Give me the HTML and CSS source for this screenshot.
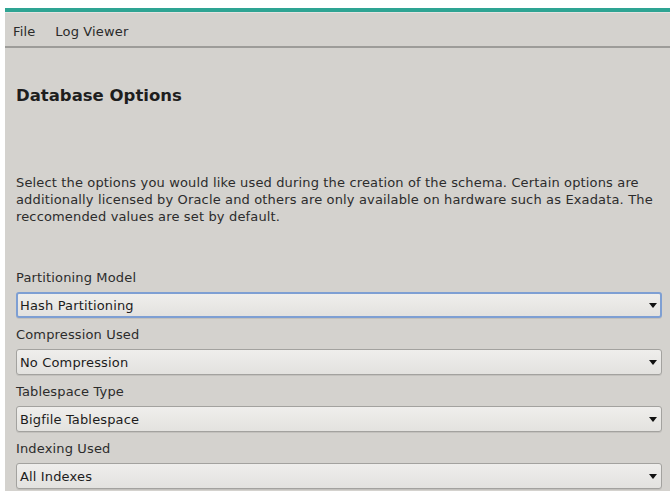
FILE: index.html
```html
<!DOCTYPE html>
<html lang="en">
<head>
<meta charset="utf-8">
<title>Database Options</title>
<link rel="stylesheet" href="styles.css">
</head>
<body>
<div class="app">
  <div class="accent"></div>
  <nav class="menubar">
    <span class="menu-item">File</span>
    <span class="menu-item">Log Viewer</span>
  </nav>
  <main class="content">
    <h1 class="title">Database Options</h1>
    <p class="intro">Select the options you would like used during the creation of the schema. Certain options are additionally licensed by Oracle and others are only available on hardware such as Exadata. The reccomended values are set by default.</p>
    <div class="field">
      <div class="label">Partitioning Model</div>
      <div class="combo focused"><span class="combo-text">Hash Partitioning</span><span class="arrow"></span></div>
    </div>
    <div class="field">
      <div class="label">Compression Used</div>
      <div class="combo"><span class="combo-text">No Compression</span><span class="arrow"></span></div>
    </div>
    <div class="field">
      <div class="label">Tablespace Type</div>
      <div class="combo"><span class="combo-text">Bigfile Tablespace</span><span class="arrow"></span></div>
    </div>
    <div class="field">
      <div class="label">Indexing Used</div>
      <div class="combo"><span class="combo-text">All Indexes</span><span class="arrow"></span></div>
    </div>
  </main>
</div>
</body>
</html>
```
FILE: styles.css
```css
html, body {
  margin: 0;
  padding: 0;
  background: #ffffff;
  overflow: hidden;
}

.app {
  margin: 8px 0 0 5px;
  height: 483px;
  background: #d4d2ce;
  font-family: "DejaVu Sans", "Noto Sans", sans-serif;
  font-size: 13px;
  letter-spacing: 0.15px;
  color: #2a2a2a;
  overflow: hidden;
}

.accent {
  height: 4px;
  background: #2ea493;
  border-bottom: 1px solid #e4e3e0;
}

.menubar {
  height: 35px;
  box-sizing: border-box;
  padding: 3px 0 0 8px;
  display: flex;
  align-items: center;
  gap: 20px;
  border-bottom: 2px solid #9d9c99;
}

.menu-item {
  color: #2a2a2a;
}

.content {
  padding: 0 8px 0 11px;
}

.title {
  margin: 38px 0 0;
  font-size: 16.5px;
  line-height: 20px;
  font-weight: bold;
  letter-spacing: 0;
  color: #1e1e1e;
}

.intro {
  margin: 68px 0 36px;
  line-height: 17px;
  color: #2c2c2c;
}

.field {
  display: flex;
  flex-direction: column;
}

.label {
  height: 31px;
  box-sizing: border-box;
  padding-top: 3px;
  line-height: 28px;
  color: #2c2c2c;
}

.combo {
  position: relative;
  height: 24px;
  border: 1px solid #a3a29f;
  border-radius: 3px;
  background: linear-gradient(#efeeec, #e3e2df);
  box-shadow: 0 1px 0 rgba(0, 0, 0, 0.08);
  display: flex;
  align-items: center;
}

.combo.focused {
  border: 2px solid #7e9fd3;
  height: 22px;
}

.combo-text {
  padding-left: 3px;
  color: #1c1c1c;
}

.combo.focused .combo-text {
  padding-left: 2px;
}

.arrow {
  position: absolute;
  right: 4px;
  top: 50%;
  margin-top: -2px;
  width: 0;
  height: 0;
  border-left: 4.5px solid transparent;
  border-right: 4.5px solid transparent;
  border-top: 5px solid #111111;
}

.combo.focused .arrow {
  right: 3px;
}
```
